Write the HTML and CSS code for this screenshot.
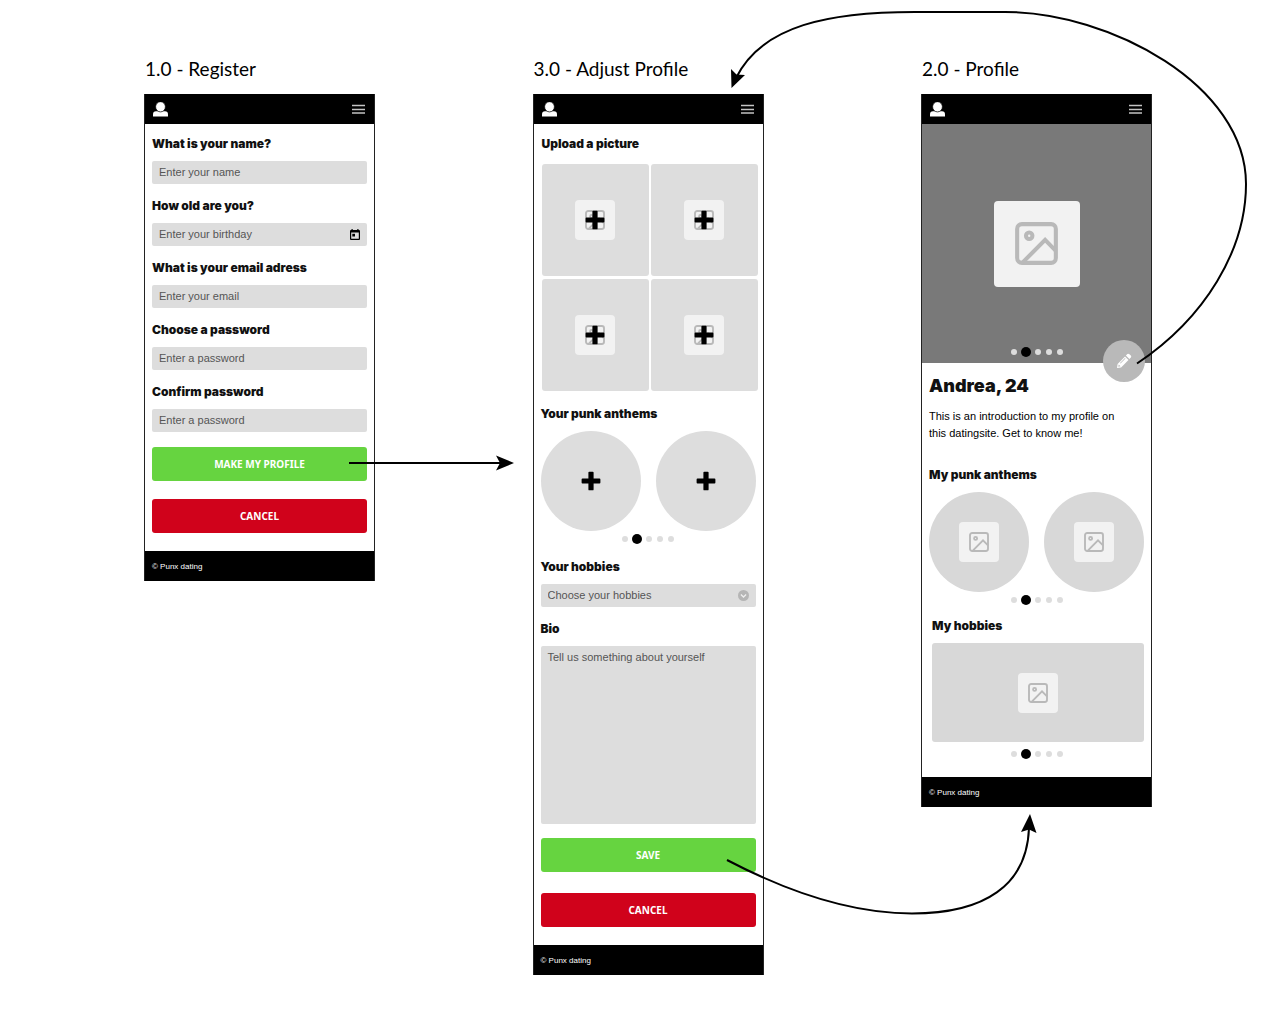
FILE: index.html
```html
<!DOCTYPE html>
<html lang="en">
<head>
<meta charset="utf-8">
<meta name="viewport" content="width=device-width, initial-scale=1">
<title>Punx dating - wireflow</title>
<link rel="stylesheet" href="styles.css">
</head>
<body>
<svg class="symbols" aria-hidden="true">
  <symbol id="person" viewBox="0 0 15 15"><path d="M0 14.600V12.200Q0 9.400 3 9.200H12Q15 9.400 15 12.200V14.600Z"/><ellipse cx="7.500" cy="4.800" rx="4.900" ry="5.100" stroke="#000" stroke-width=".7"/></symbol>
  <symbol id="menu" viewBox="0 0 13 10"><path d="M0 1.500H13M0 5.500H13M0 9H13" fill="none" stroke="#c4c4c4" stroke-width="1.300"/></symbol>
  <symbol id="picture" viewBox="0 0 20 20"><g fill="none" stroke="#b9b9b9" stroke-width="1.900"><rect x="1" y="1" width="18" height="18" rx="2.200"/><circle cx="6.600" cy="6.400" r="1.500"/><path d="M3.600 18.800 14 8.300 19 13.400"/></g></symbol>
  <symbol id="plus" viewBox="0 0 20 20"><path d="M8.300 .7h3.400q.9 0 .9.900v5.900h5.900q.9 0 .9.900v3.200q0 .9-.9.900h-5.900v5.900q0 .9-.9.900H8.300q-.9 0-.9-.9v-5.900H1.500q-.9 0-.9-.9V8.400q0-.9.900-.9h5.900V1.600q0-.9.900-.9Z"/></symbol>
</svg>
<main class="board">
  <section class="step">
    <h2 class="step-title">1.0 - Register</h2>
    <div class="phone">
      <header class="topbar">
        <button class="icon-button" aria-label="Account"><svg class="person"><use href="#person"/></svg></button>
        <button class="icon-button" aria-label="Menu"><svg class="menu"><use href="#menu"/></svg></button>
      </header>
      <form class="content fields">
        <div class="field"><label class="label" for="name">What is your name?</label><input class="control" id="name" type="text" placeholder="Enter your name"></div>
        <div class="field"><label class="label" for="birthday">How old are you?</label>
          <div class="control-wrap"><input class="control" id="birthday" type="text" placeholder="Enter your birthday">
            <svg class="control-icon calendar" viewBox="0 0 10 11"><path fill-rule="evenodd" d="M1.500 0H2.700V1H7.300V0H8.500V1H9Q10 1 10 2V10Q10 11 9 11H1Q0 11 0 10V2Q0 1 1 1H1.500ZM1.200 3.600V9.800H8.800V3.600Z"/><path d="M2.300 4.800H5V7.500H2.300Z"/></svg></div>
        </div>
        <div class="field"><label class="label" for="email">What is your email adress</label><input class="control" id="email" type="email" placeholder="Enter your email"></div>
        <div class="field"><label class="label" for="password">Choose a password</label><input class="control" id="password" type="password" placeholder="Enter a password"></div>
        <div class="field"><label class="label" for="confirm">Confirm password</label><input class="control" id="confirm" type="password" placeholder="Enter a password"></div>
        <div class="actions"><button class="button confirm" type="button">MAKE MY PROFILE</button><button class="button cancel" type="button">CANCEL</button></div>
      </form>
      <footer class="footer">© Punx dating</footer>
    </div>
  </section>

  <section class="step">
    <h2 class="step-title">3.0 - Adjust Profile</h2>
    <div class="phone">
      <header class="topbar">
        <button class="icon-button" aria-label="Account"><svg class="person"><use href="#person"/></svg></button>
        <button class="icon-button" aria-label="Menu"><svg class="menu"><use href="#menu"/></svg></button>
      </header>
      <form class="content">
        <div class="uploads">
          <h3 class="label">Upload a picture</h3>
          <div class="tiles">
            <button class="tile" type="button" aria-label="Add picture 1"><span class="thumb"><svg class="glyph"><use href="#picture"/></svg><svg class="glyph over"><use href="#plus"/></svg></span></button>
            <button class="tile" type="button" aria-label="Add picture 2"><span class="thumb"><svg class="glyph"><use href="#picture"/></svg><svg class="glyph over"><use href="#plus"/></svg></span></button>
            <button class="tile" type="button" aria-label="Add picture 3"><span class="thumb"><svg class="glyph"><use href="#picture"/></svg><svg class="glyph over"><use href="#plus"/></svg></span></button>
            <button class="tile" type="button" aria-label="Add picture 4"><span class="thumb"><svg class="glyph"><use href="#picture"/></svg><svg class="glyph over"><use href="#plus"/></svg></span></button>
          </div>
        </div>
        <div class="anthems">
          <h3 class="label">Your punk anthems</h3>
          <div class="discs">
            <button class="disc" type="button" aria-label="Add anthem 1"><svg class="glyph"><use href="#plus"/></svg></button>
            <button class="disc" type="button" aria-label="Add anthem 2"><svg class="glyph"><use href="#plus"/></svg></button>
          </div>
          <div class="dots"><i class="dot"></i><i class="dot active"></i><i class="dot"></i><i class="dot"></i><i class="dot"></i></div>
        </div>
        <div class="fields about">
          <div class="field"><label class="label" for="hobbies">Your hobbies</label>
            <div class="control-wrap"><select class="control" id="hobbies"><option>Choose your hobbies</option></select>
              <svg class="control-icon chevron" viewBox="0 0 11 11"><circle cx="5.500" cy="5.500" r="5.500" fill="#b5b5b5"/><path d="M2.900 4.500 5.500 7 8.100 4.500" fill="none" stroke="#eee" stroke-width="1.300"/></svg></div>
          </div>
          <div class="field"><label class="label" for="bio">Bio</label><textarea class="control bio" id="bio" placeholder="Tell us something about yourself"></textarea></div>
        </div>
        <div class="actions spaced"><button class="button confirm" type="button">SAVE</button><button class="button cancel" type="button">CANCEL</button></div>
      </form>
      <footer class="footer">© Punx dating</footer>
    </div>
  </section>

  <section class="step">
    <h2 class="step-title">2.0 - Profile</h2>
    <div class="phone">
      <header class="topbar">
        <button class="icon-button" aria-label="Account"><svg class="person"><use href="#person"/></svg></button>
        <button class="icon-button" aria-label="Menu"><svg class="menu"><use href="#menu"/></svg></button>
      </header>
      <div class="hero">
        <span class="thumb large"><svg class="glyph large"><use href="#picture"/></svg></span>
        <div class="dots hero-dots"><i class="dot"></i><i class="dot active"></i><i class="dot"></i><i class="dot"></i><i class="dot"></i></div>
        <button class="edit" aria-label="Edit profile"><svg class="pencil" viewBox="0 0 16 16"><path fill="#fff" fill-rule="evenodd" d="M1 15 1.600 10.900 9 3.500 12.500 7 5.100 14.400ZM9.900 2.600 11.400 1.100Q12.400 .3 13.400 1.200L14.800 2.600Q15.700 3.600 14.900 4.600L13.400 6.100ZM2.700 11.500 2.300 13.700 4.500 13.300ZM9 5 4 10 4.500 10.500 9.500 5.500Z"/></svg></button>
      </div>
      <div class="content">
        <h3 class="profile-name">Andrea, 24</h3>
        <p class="intro">This is an introduction to my profile on<br>this datingsite. Get to know me!</p>
        <h4 class="label">My punk anthems</h4>
        <div class="discs shown">
          <div class="disc"><span class="thumb"><svg class="glyph"><use href="#picture"/></svg></span></div>
          <div class="disc"><span class="thumb"><svg class="glyph"><use href="#picture"/></svg></span></div>
        </div>
        <div class="dots"><i class="dot"></i><i class="dot active"></i><i class="dot"></i><i class="dot"></i><i class="dot"></i></div>
        <div class="hobbies">
          <h4 class="label">My hobbies</h4>
          <div class="banner"><span class="thumb"><svg class="glyph"><use href="#picture"/></svg></span></div>
        </div>
        <div class="dots hobby-dots"><i class="dot"></i><i class="dot active"></i><i class="dot"></i><i class="dot"></i><i class="dot"></i></div>
      </div>
      <footer class="footer">© Punx dating</footer>
    </div>
  </section>

  <svg class="flows" viewBox="128 0 1152 1024" aria-hidden="true">
    <g fill="none" stroke="#000" stroke-width="2">
      <path d="M349 463H502"/>
      <path d="M727 860C790 893 855 913.500 912 913.500C985 913.500 1027 885 1029 828"/>
      <path d="M1137 363.500C1205 318 1246 250 1246 184C1246 85 1110 12 1005 12H915C830 12 762 25 736 78"/>
    </g>
    <path d="M514 463 496 455.500 500 463 496 470.500ZM1030 814 1021 832 1029 829.500 1036.500 833ZM731.500 88 731 69 736.500 74.500 745 75Z"/>
  </svg>
</main>
</body>
</html>
```
FILE: styles.css
```css
* { box-sizing: border-box; }

body {
  margin: 0;
  background: #fff;
  color: #111;
  font: 11px/17px "Liberation Sans", Arial, sans-serif;
}

h2, h3, h4, p { margin: 0; }

button {
  border: 0;
  padding: 0;
  color: inherit;
  cursor: pointer;
}

svg { display: block; }

.symbols {
  position: absolute;
  width: 0;
  height: 0;
}

/* Canvas with the three screens side by side */
.board {
  position: relative;
  display: flex;
  align-items: flex-start;
  justify-content: space-between;
  width: 1024px;
  margin: 0 auto;
  padding: 57px 0 48px 16px;
}

.flows {
  position: absolute;
  top: 0;
  left: 0;
  width: 1152px;
  height: 1024px;
  pointer-events: none;
}

.step { width: 231px; }

.step-title {
  margin-bottom: 13px;
  padding-left: 1px;
  color: #000;
  font: 400 19px/24px Lato, sans-serif;
  white-space: nowrap;
}

.phone {
  border: 1px solid #222;
  border-width: 0 1px;
}

.topbar {
  display: flex;
  align-items: center;
  justify-content: space-between;
  height: 30px;
  padding: 0 9px 0 8px;
  background: #000;
}

.icon-button { background: none; }

.person {
  width: 15px;
  height: 15px;
  fill: #fff;
}

.menu {
  width: 13px;
  height: 10px;
}

.content { padding: 11px 7px 18px; }

.footer {
  height: 30px;
  padding: 0 7px;
  background: #000;
  color: #fff;
  font-size: 8px;
  line-height: 32px;
}

/* Form fields */
.label {
  display: block;
  font: 900 12px/18px Inter, sans-serif;
}

.fields {
  display: flex;
  flex-direction: column;
  gap: 13px;
}

.field {
  display: flex;
  flex-direction: column;
  gap: 8px;
}

.control {
  display: block;
  width: 100%;
  height: 23px;
  margin: 0;
  border: 0;
  border-radius: 2px;
  padding: 0 7px 1px;
  background: #ddd;
  color: #555;
  font: 11px/17px "Liberation Sans", Arial, sans-serif;
  appearance: none;
  resize: none;
}

.control::placeholder {
  color: #555;
  opacity: 1;
}

.control.bio {
  height: 178px;
  padding-top: 3px;
}

.control-wrap { position: relative; }

.control-icon {
  position: absolute;
  top: 6px;
  right: 7px;
  height: 11px;
  pointer-events: none;
}

.calendar { width: 10px; }

.chevron { width: 11px; }

.actions {
  display: flex;
  flex-direction: column;
  gap: 18px;
  margin-top: 2px;
}

.actions.spaced {
  gap: 21px;
  margin-top: 14px;
}

.button {
  height: 34px;
  border-radius: 3px;
  color: #fff;
  font: 700 10px/16px "Noto Sans", sans-serif;
}

.confirm { background: #66d440; }

.cancel { background: #d0021b; }

/* Picture placeholders */
.uploads { margin: 0 -2px 0 1px; }

.tiles {
  display: grid;
  grid-template-columns: 1fr 1fr;
  gap: 3px 2px;
  margin-top: 11px;
}

.tile {
  display: grid;
  place-items: center;
  height: 112px;
  border-radius: 3px;
  background: #ddd;
}

.thumb {
  position: relative;
  display: grid;
  place-items: center;
  width: 40px;
  height: 40px;
  border-radius: 4px;
  background: #f2f2f2;
}

.thumb.large {
  width: 86px;
  height: 86px;
}

.glyph {
  width: 20px;
  height: 20px;
}

.glyph.large {
  width: 43px;
  height: 43px;
}

.glyph.over {
  position: absolute;
  inset: 10px;
}

.anthems { margin-top: 14px; }

.about { margin-top: 14px; }

.discs {
  display: flex;
  justify-content: space-between;
  margin-top: 8px;
}

.disc {
  display: grid;
  place-items: center;
  width: 100px;
  height: 100px;
  border-radius: 50%;
  background: #ddd;
}

.shown .disc { background: #d8d8d8; }

.dots {
  display: flex;
  align-items: center;
  justify-content: center;
  gap: 5px;
  height: 10px;
  margin-top: 3px;
}

.dot {
  width: 6px;
  height: 6px;
  border-radius: 50%;
  background: #ddd;
}

.dot.active {
  width: 10px;
  height: 10px;
  margin: 0 -1px;
  background: #000;
}

/* Profile screen */
.hero {
  position: relative;
  display: grid;
  place-items: center;
  height: 239px;
  background: #797979;
}

.hero-dots {
  position: absolute;
  right: 0;
  bottom: 6px;
  left: 0;
}

.edit {
  position: absolute;
  right: 6px;
  bottom: -19px;
  display: grid;
  place-items: center;
  width: 42px;
  height: 42px;
  border-radius: 50%;
  background: #b9b9b9;
}

.pencil {
  width: 16px;
  height: 16px;
}

.profile-name { font: 900 18px/24px Inter, sans-serif; }

.intro {
  margin: 10px 0 24px;
  color: #000;
}

.hobbies {
  margin-top: 12px;
  padding-left: 3px;
}

.banner {
  display: grid;
  place-items: center;
  height: 99px;
  margin-top: 8px;
  border-radius: 3px;
  background: #d8d8d8;
}

.hobby-dots { margin-top: 7px; }
```
